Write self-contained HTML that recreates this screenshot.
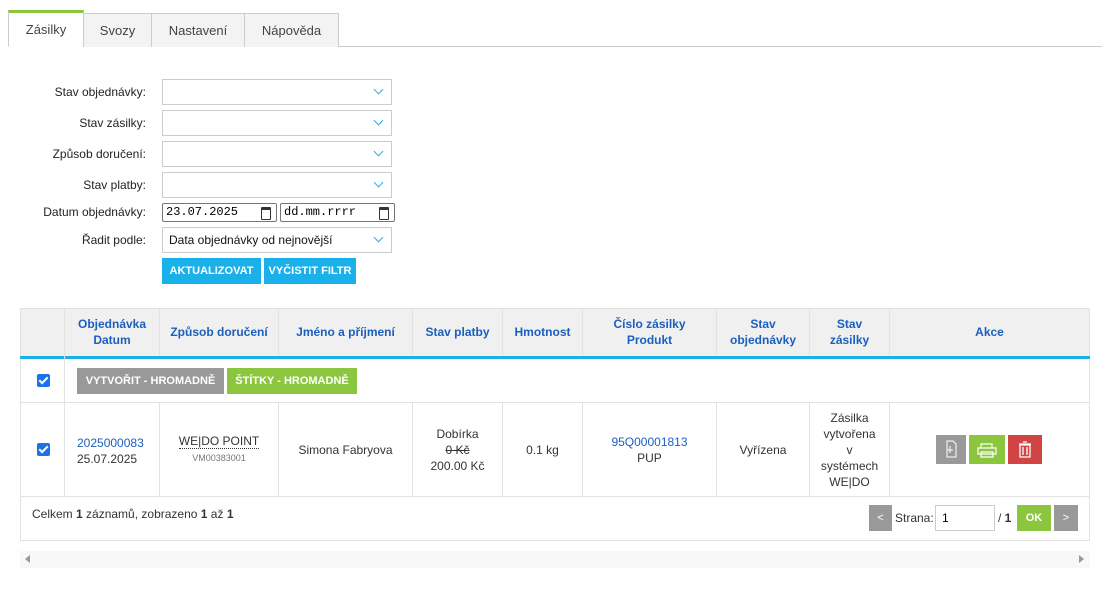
<!DOCTYPE html>
<html><head><meta charset="utf-8"><style>
*{box-sizing:border-box;margin:0;padding:0}
body{width:1106px;height:615px;background:#fff;font-family:"Liberation Sans",sans-serif;font-size:12px;color:#333;position:relative;overflow:hidden}
.a{position:absolute}
.tab{position:absolute;top:13px;height:34px;border:1px solid #ccc;border-bottom:none;background:#f3f3f3;text-align:center;line-height:33px;font-size:13px;color:#444}
.lbl{position:absolute;right:960px;font-size:12px;color:#222;text-align:right;white-space:nowrap}
.sel{position:absolute;left:162px;width:230px;height:26px;border:1px solid #ccc;background:#fff;font-size:12px;padding-left:6px;line-height:24px;color:#111}
.sel:after{content:"";position:absolute;right:9px;top:6px;width:6px;height:6px;border-right:1.3px solid #3aa9dd;border-bottom:1.3px solid #3aa9dd;transform:rotate(45deg)}
.btn{position:absolute;color:#fff;font-weight:bold;font-size:11px;text-align:center;white-space:nowrap}
.vl{position:absolute;width:1px;background:#e2e2e2}
.hl{position:absolute;height:1px;background:#e2e2e2;left:20px;width:1070px}
.th{position:absolute;top:308px;height:48px;display:flex;align-items:center;justify-content:center;text-align:center;color:#1b5fbf;font-weight:bold;font-size:12px;line-height:16px}
.td{position:absolute;top:403px;height:93px;display:flex;align-items:center;justify-content:center;text-align:center;font-size:12px;line-height:16px;color:#333}
.cb{position:absolute;left:37px;width:13px;height:13px;background:#1a73e8;border-radius:2px}
.cb:after{content:"";position:absolute;left:4px;top:1px;width:3px;height:7px;border-right:2px solid #fff;border-bottom:2px solid #fff;transform:rotate(45deg)}
.date{position:absolute;top:203px;height:19px;border:1px solid #777;border-radius:2px;font-family:"Liberation Mono",monospace;font-size:12px;padding-left:3px;line-height:17px;color:#000}
.date:after{content:"";position:absolute;right:5px;top:3px;width:8px;height:9px;border:1.3px solid #333;border-top-width:3px;border-radius:1px}
</style></head><body>
<div class="a" style="left:8px;top:46px;width:1094px;height:1px;background:#ccc"></div>
<div class="tab" style="left:8px;width:76px;top:10px;height:37px;background:#fff;border-top:3px solid #8cc63f;line-height:33px;border-bottom:1px solid #fff">Zásilky</div>
<div class="tab" style="left:83px;width:69px">Svozy</div>
<div class="tab" style="left:151px;width:94px">Nastavení</div>
<div class="tab" style="left:244px;width:95px">Nápověda</div>

<div class="lbl" style="top:85px">Stav objednávky:</div>
<div class="lbl" style="top:116px">Stav zásilky:</div>
<div class="lbl" style="top:147px">Způsob doručení:</div>
<div class="lbl" style="top:178px">Stav platby:</div>
<div class="lbl" style="top:205px">Datum objednávky:</div>
<div class="lbl" style="top:233px">Řadit podle:</div>
<div class="sel" style="top:79px"></div>
<div class="sel" style="top:110px"></div>
<div class="sel" style="top:141px"></div>
<div class="sel" style="top:172px"></div>
<div class="date" style="left:162px;width:115px">23.07.2025</div>
<div class="date" style="left:280px;width:115px">dd.mm.rrrr</div>
<div class="sel" style="top:227px">Data objednávky od nejnovější</div>
<div class="btn" style="left:162px;top:258px;width:99px;height:26px;line-height:26px;background:#1ab0ea">AKTUALIZOVAT</div>
<div class="btn" style="left:264px;top:258px;width:92px;height:26px;line-height:26px;background:#1ab0ea">VYČISTIT FILTR</div>

<div class="a" style="left:20px;top:308px;width:1070px;height:233px;border:1px solid #e2e2e2"></div>
<div class="a" style="left:21px;top:309px;width:1068px;height:47px;background:#f0f0f0"></div>
<div class="a" style="left:20px;top:356px;width:1070px;height:3px;background:#1ab0ea"></div>
<div class="hl" style="top:402px"></div>
<div class="hl" style="top:496px"></div>
<div class="vl" style="left:64px;top:308px;height:188px"></div>
<div class="vl" style="left:159px;top:308px;height:48px"></div><div class="vl" style="left:159px;top:403px;height:93px"></div>
<div class="vl" style="left:278px;top:308px;height:48px"></div><div class="vl" style="left:278px;top:403px;height:93px"></div>
<div class="vl" style="left:412px;top:308px;height:48px"></div><div class="vl" style="left:412px;top:403px;height:93px"></div>
<div class="vl" style="left:502px;top:308px;height:48px"></div><div class="vl" style="left:502px;top:403px;height:93px"></div>
<div class="vl" style="left:582px;top:308px;height:48px"></div><div class="vl" style="left:582px;top:403px;height:93px"></div>
<div class="vl" style="left:716px;top:308px;height:48px"></div><div class="vl" style="left:716px;top:403px;height:93px"></div>
<div class="vl" style="left:809px;top:308px;height:48px"></div><div class="vl" style="left:809px;top:403px;height:93px"></div>
<div class="vl" style="left:889px;top:308px;height:48px"></div><div class="vl" style="left:889px;top:403px;height:93px"></div>

<div class="th" style="left:65px;width:94px">Objednávka<br>Datum</div>
<div class="th" style="left:160px;width:118px">Způsob doručení</div>
<div class="th" style="left:279px;width:133px">Jméno a příjmení</div>
<div class="th" style="left:413px;width:89px">Stav platby</div>
<div class="th" style="left:503px;width:79px">Hmotnost</div>
<div class="th" style="left:583px;width:133px"><div>Číslo zásilky<br>Produkt</div></div>
<div class="th" style="left:717px;width:92px">Stav<br>objednávky</div>
<div class="th" style="left:810px;width:79px">Stav<br>zásilky</div>
<div class="th" style="left:890px;width:199px">Akce</div>

<div class="cb" style="top:374px"></div>
<div class="btn" style="left:77px;top:368px;width:147px;height:26px;line-height:26px;background:#999">VYTVOŘIT - HROMADNĚ</div>
<div class="btn" style="left:227px;top:368px;width:130px;height:26px;line-height:26px;background:#8cc63f">ŠTÍTKY - HROMADNĚ</div>

<div class="cb" style="top:443px"></div>
<div class="a" style="left:77px;top:435px;line-height:16px;font-size:12px"><span style="color:#1b5fbf">2025000083</span><br>25.07.2025</div>
<div class="td" style="left:160px;width:118px"><div><span style="border-bottom:1px dotted #333">WE|DO POINT</span><br><span style="font-size:9px;color:#777">VM00383001</span></div></div>
<div class="td" style="left:279px;width:133px">Simona Fabryova</div>
<div class="td" style="left:413px;width:89px"><div>Dobírka<br><s>0 Kč</s><br>200.00 Kč</div></div>
<div class="td" style="left:503px;width:79px">0.1 kg</div>
<div class="td" style="left:583px;width:133px"><div><span style="color:#1b5fbf">95Q00001813</span><br>PUP</div></div>
<div class="td" style="left:717px;width:92px">Vyřízena</div>
<div class="td" style="left:810px;width:79px"><div>Zásilka<br>vytvořena<br>v<br>systémech<br>WE|DO</div></div>
<div class="a" style="left:936px;top:435px;width:30px;height:29px;background:#999"><svg width="30" height="29"><path d="M11 6h6l3 3v13h-9z M14 11v7 M11 15h6" stroke="#fff" fill="none" stroke-width="1"/></svg></div>
<div class="a" style="left:969px;top:435px;width:36px;height:29px;background:#8cc63f"><svg width="36" height="29"><path d="M12 9h11v4H12z M9 13h18v6H9z M12 17h12v5H12z" stroke="#fff" fill="none" stroke-width="1.2"/></svg></div>
<div class="a" style="left:1008px;top:435px;width:34px;height:29px;background:#d04444"><svg width="34" height="29"><path d="M11 9h12 M15 7h4 M12 10h10v12H12z M15 12v8 M19 12v8" stroke="#fff" fill="none" stroke-width="1.3"/></svg></div>

<div class="a" style="left:32px;top:507px;font-size:12px">Celkem <b>1</b> záznamů, zobrazeno <b>1</b> až <b>1</b></div>
<div class="btn" style="left:869px;top:505px;width:23px;height:26px;line-height:26px;background:#999;font-weight:normal">&lt;</div>
<div class="a" style="left:895px;top:511px">Strana:</div>
<div class="a" style="left:935px;top:505px;width:60px;height:26px;border:1px solid #ccc;padding:5px 0 0 6px;color:#000">1</div>
<div class="a" style="left:998px;top:511px">/ <b>1</b></div>
<div class="btn" style="left:1017px;top:505px;width:34px;height:26px;line-height:26px;background:#8cc63f">OK</div>
<div class="btn" style="left:1054px;top:505px;width:24px;height:26px;line-height:26px;background:#999;font-weight:normal">&gt;</div>

<div class="a" style="left:20px;top:551px;width:1070px;height:17px;background:#f8f8f8"></div>
<div class="a" style="left:25px;top:555px;width:0;height:0;border-top:4px solid transparent;border-bottom:4px solid transparent;border-right:5px solid #999"></div>
<div class="a" style="left:1079px;top:555px;width:0;height:0;border-top:4px solid transparent;border-bottom:4px solid transparent;border-left:5px solid #999"></div>
</body></html>
